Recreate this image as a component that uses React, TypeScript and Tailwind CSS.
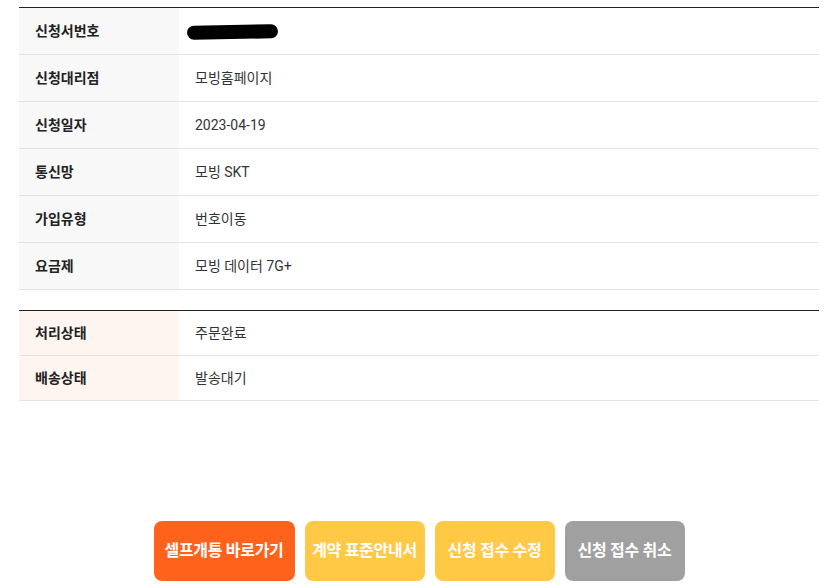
import React from 'react';

const orderRows = [
  { label: '신청대리점', value: '모빙홈페이지' },
  { label: '신청일자', value: '2023-04-19' },
  { label: '통신망', value: '모빙 SKT' },
  { label: '가입유형', value: '번호이동' },
  { label: '요금제', value: '모빙 데이터 7G+' },
];

const statusRows = [
  { label: '처리상태', value: '주문완료' },
  { label: '배송상태', value: '발송대기' },
];

export default function App() {
  return (
    <div
      className="w-[834px] h-[588px] bg-white pt-[7px] text-[14px] text-[#222]"
      style={{ fontFamily: 'Roboto, "Noto Sans CJK KR", sans-serif' }}
    >
      <div className="ml-[19px] w-[800px]">
        {/* 신청 정보 */}
        <div className="border-t border-[#222]">
          <div className="flex h-[47px] border-b border-[#e3e3e3]">
            <div className="w-[160px] bg-[#f8f8f8] flex items-center pl-4 font-bold">신청서번호</div>
            <div className="flex-1 flex items-center pl-[8px]">
              <div className="w-[91px] h-[14px] bg-black rounded-full -rotate-1 mt-[1px]" />
            </div>
          </div>
          {orderRows.map((row) => (
            <div key={row.label} className="flex h-[47px] border-b border-[#e3e3e3]">
              <div className="w-[160px] bg-[#f8f8f8] flex items-center pl-4 font-bold">{row.label}</div>
              <div className="flex-1 flex items-center pl-4 text-[#333]">{row.value}</div>
            </div>
          ))}
        </div>

        {/* 처리 상태 */}
        <div className="mt-[20px] border-t border-[#222]">
          {statusRows.map((row) => (
            <div key={row.label} className="flex h-[45px] border-b border-[#e3e3e3]">
              <div className="w-[160px] bg-[#fff5f0] flex items-center pl-4 font-bold">{row.label}</div>
              <div className="flex-1 flex items-center pl-4 text-[#333]">{row.value}</div>
            </div>
          ))}
        </div>

        {/* 버튼 */}
        <div className="mt-[120px] flex justify-center gap-[10px]">
          <button className="w-[141px] h-[60px] rounded-lg bg-[#ff631b] text-white font-bold text-[16px] tracking-[-0.3px]">
            셀프개통 바로가기
          </button>
          <button className="w-[120px] h-[60px] rounded-lg bg-[#ffc845] text-white font-bold text-[16px] tracking-[-0.3px]">
            계약 표준안내서
          </button>
          <button className="w-[120px] h-[60px] rounded-lg bg-[#ffc845] text-white font-bold text-[16px] tracking-[-0.3px]">
            신청 접수 수정
          </button>
          <button className="w-[120px] h-[60px] rounded-lg bg-[#a0a0a0] text-white font-bold text-[16px] tracking-[-0.3px]">
            신청 접수 취소
          </button>
        </div>
      </div>
    </div>
  );
}
